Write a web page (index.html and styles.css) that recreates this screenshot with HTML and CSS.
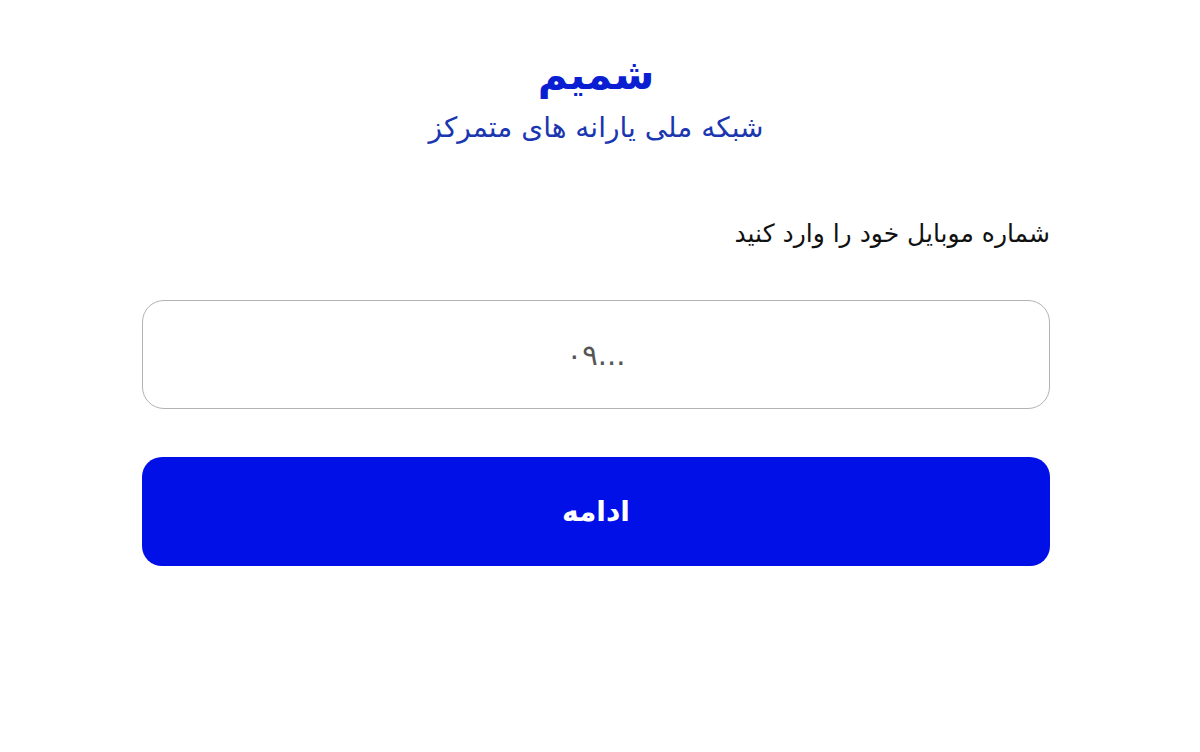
FILE: index.html
```html
<!DOCTYPE html>
<html lang="fa" dir="rtl">
<head>
<meta charset="utf-8">
<title>شمیم</title>
<link rel="stylesheet" href="styles.css">
</head>
<body>
<main class="page">
  <header class="brand">
    <h1 class="brand-title">شمیم</h1>
    <p class="brand-sub">شبکه ملی یارانه های متمرکز</p>
  </header>
  <form class="login">
    <label class="login-label" for="mobile">شماره موبایل خود را وارد کنید</label>
    <input class="login-input" id="mobile" type="text" placeholder="۰۹...">
    <button class="login-btn" type="button">ادامه</button>
  </form>
</main>
</body>
</html>
```
FILE: styles.css
```css
* { box-sizing: border-box; }
html, body { margin: 0; padding: 0; background: #ffffff; }
body {
  font-family: "DejaVu Sans", "Noto Sans", sans-serif;
  width: 1200px;
  height: 752px;
  overflow: hidden;
}
.page {
  display: flex;
  flex-direction: column;
  align-items: center;
  padding-top: 45px;
}
.brand {
  display: flex;
  flex-direction: column;
  align-items: center;
  margin-right: 8px;
}
.brand-title {
  margin: 0;
  font-size: 41px;
  font-weight: bold;
  color: #0a1fd2;
  line-height: 60px;
}
.brand-sub {
  margin: 2px 0 0;
  font-size: 28px;
  color: #1a36b0;
  line-height: 42px;
}
.login {
  width: 908px;
  margin-right: 8px;
  display: flex;
  flex-direction: column;
  margin-top: 67px;
}
.login-label {
  font-size: 25px;
  color: #111;
  line-height: 36px;
  margin-bottom: 48px;
}
.login-input {
  height: 109px;
  border: 1.5px solid #b3b3b3;
  border-radius: 22px;
  background: #fff;
  text-align: center;
  font-family: "DejaVu Sans", sans-serif;
  font-size: 29px;
  letter-spacing: 4px;
  color: #333;
  outline: none;
  direction: ltr;
}
.login-input::placeholder { color: #555; }
.login-btn {
  margin-top: 48px;
  height: 109px;
  border: none;
  border-radius: 20px;
  background: #0010e6;
  color: #fff;
  font-family: "DejaVu Sans", sans-serif;
  font-size: 28px;
  font-weight: bold;
  cursor: pointer;
}
```
